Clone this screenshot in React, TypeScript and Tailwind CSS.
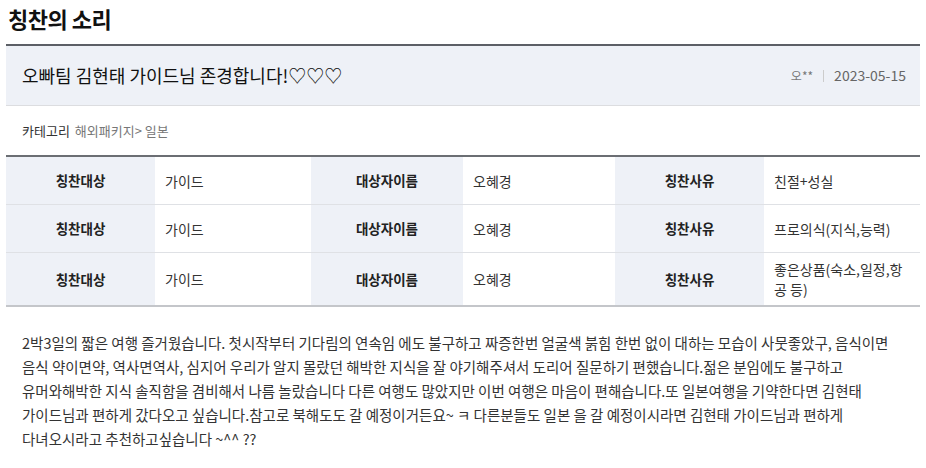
import React from "react";

const rows = [
  ["가이드", "오혜경", "친절+성실"],
  ["가이드", "오혜경", "프로의식(지식,능력)"],
  ["가이드", "오혜경", "좋은상품(숙소,일정,항공 등)"],
];

const body = [
  "2박3일의 짧은 여행 즐거웠습니다. 첫시작부터 기다림의 연속임 에도 불구하고 짜증한번 얼굴색 붉힘 한번 없이 대하는 모습이 사뭇좋았구, 음식이면",
  "음식 약이면약, 역사면역사, 심지어 우리가 알지 몰랐던 해박한 지식을 잘 야기해주셔서 도리어 질문하기 편했습니다.젊은 분임에도 불구하고",
  "유머와해박한 지식 솔직함을 겸비해서 나름 놀랐습니다 다른 여행도 많았지만 이번 여행은 마음이 편해습니다.또 일본여행을 기약한다면 김현태",
  "가이드님과 편하게 갔다오고 싶습니다.참고로 북해도도 갈 예정이거든요~ ㅋ 다른분들도 일본 을 갈 예정이시라면 김현태 가이드님과 편하게",
  "다녀오시라고 추천하고싶습니다 ~^^ ??",
];

const Label: React.FC<{ children: React.ReactNode }> = ({ children }) => (
  <div className="flex items-center justify-center bg-[#eef1f7] text-[13.5px] font-bold text-[#222]">
    {children}
  </div>
);

const Value: React.FC<{ children: React.ReactNode }> = ({ children }) => (
  <div className="flex items-center px-[10px] py-[6px] text-[14px] leading-[20px] text-[#333]">
    {children}
  </div>
);

export default function App() {
  return (
    <div
      className="w-[926px] bg-white px-[6px] text-[#222]"
      style={{ fontFamily: '"Noto Sans CJK KR", "Noto Sans", sans-serif' }}
    >
      <h1 className="flex h-[36px] items-center pl-[2px] text-[22px] font-bold tracking-[-0.5px] text-[#111]">
        칭찬의 소리
      </h1>
      <div className="mt-[8px] border-t-2 border-[#5c5f66]">
        <div className="flex h-[60px] items-center justify-between border-b border-[#dcdde0] bg-[#eef1f7] pl-[16px] pr-[14px]">
          <span className="text-[18px] text-[#111]">오빠팀 김현태 가이드님 존경합니다!♡♡♡</span>
          <div className="flex items-center text-[#666]">
            <span className="text-[12px] text-[#777]">오**</span>
            <span className="mx-[10px] h-[12px] w-px bg-[#ccc]" />
            <span className="text-[14px]">2023-05-15</span>
          </div>
        </div>
        <div className="flex h-[49px] items-center pl-[16px] text-[13px]">
          <span className="text-[#333]">카테고리</span>
          <span className="ml-[5px] text-[#777]">해외패키지&gt; 일본</span>
        </div>
      </div>
      <div className="border-t-2 border-b-2 border-t-[#6b6e73] border-b-[#c4c6ca]">
        {rows.map(([a, b, c], i) => (
          <div
            key={i}
            className={`grid min-h-[48px] grid-cols-[149px_156px_152px_152px_149px_156px] ${i < rows.length - 1 ? "border-b border-[#dfe1e5]" : ""}`}
          >
            <Label>칭찬대상</Label>
            <Value>{a}</Value>
            <Label>대상자이름</Label>
            <Value>{b}</Value>
            <Label>칭찬사유</Label>
            <Value>{c}</Value>
          </div>
        ))}
      </div>
      <div className="px-[16px] pt-[24px] pb-[18px] text-[14.5px] leading-[24px] text-[#333]">
        {body.map((line, i) => (
          <div key={i} className="whitespace-nowrap">
            {line}
          </div>
        ))}
      </div>
    </div>
  );
}
